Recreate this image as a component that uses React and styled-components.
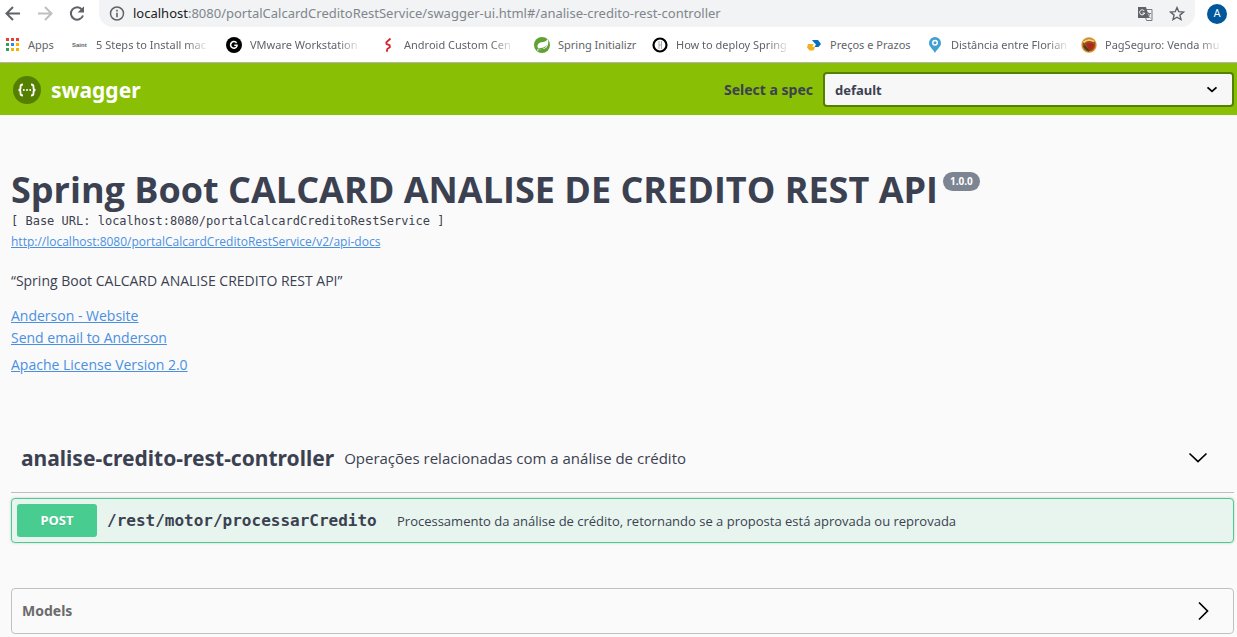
import React from 'react';
import styled, { createGlobalStyle, css } from 'styled-components';

const Global = createGlobalStyle`
  * { box-sizing: border-box; }
  body { margin: 0; background: #fafafa; color: #3b4151; font-family: "Open Sans", sans-serif; }
  button, select { font: inherit; color: inherit; }
`;

const BrowserChrome = styled.div`
  background: #fff;
  border-bottom: 1px solid #b4b4b8;
`;
const Toolbar = styled.div`
  display: flex;
  align-items: center;
  height: 27px;
  padding: 0 10px 0 4px;
`;
const IconButton = styled.button`
  display: flex;
  flex: none;
  padding: 0;
  margin-right: ${(p) => p.$gap || 0}px;
  border: 0;
  background: none;
  cursor: pointer;
`;
const AddressBar = styled.div`
  display: flex;
  flex: 1;
  align-items: center;
  min-width: 0;
  height: 27px;
  padding: 0 8px 0 10px;
  border-radius: 0 0 14px 14px;
  background: #f1f3f4;
`;
const AddressText = styled.div`
  flex: 1;
  min-width: 0;
  padding-bottom: 2px;
  white-space: nowrap;
  color: #80868b;
  font: 13px/20px "Noto Sans", sans-serif;
  strong { font-weight: 400; color: #202124; }
`;
const Avatar = styled.button`
  flex: none;
  width: 20px;
  height: 20px;
  margin-left: 12px;
  padding: 0;
  border: 0;
  border-radius: 50%;
  background: #01579b;
  && { color: #fff; font: 11px/20px Roboto, sans-serif; }
`;
const Bookmarks = styled.nav`
  display: flex;
  align-items: center;
  height: 35px;
  padding-left: 4px;
`;
const Bookmark = styled.a`
  display: flex;
  flex: 0 0 ${(p) => p.$width}px;
  align-items: center;
  gap: 8px;
  color: #5f6368;
  text-decoration: none;
  font: 11px/16px "Noto Sans", sans-serif;
`;
const BookmarkLabel = styled.span`
  white-space: nowrap;
  ${(p) => p.$fade && css`mask-image: linear-gradient(to left, rgba(0, 0, 0, 0.15), #000 20px);`}
`;
const SiteMark = styled.span`
  width: 16px;
  font: 700 6px/16px "Liberation Sans", sans-serif;
`;

const Topbar = styled.header`
  display: flex;
  align-items: center;
  justify-content: space-between;
  height: 52px;
  padding: 0 3px 0 12px;
  background: #89bf04;
`;
const Brand = styled.a`
  display: flex;
  align-items: center;
  gap: 9px;
  padding-top: 2px;
  color: #fff;
  text-decoration: none;
  font: 700 21px/28px "Noto Sans", sans-serif;
`;
const SpecField = styled.div`
  display: flex;
  align-items: center;
  gap: 10px;
`;
const SpecLabel = styled.label`
  padding-top: 2px;
  font: 700 14px/20px "Noto Sans", sans-serif;
`;
const SpecSelectBox = styled.div`
  display: grid;
  align-items: center;
  width: 411px;
  > * { grid-area: 1 / 1; }
  > svg { justify-self: end; margin-right: 16px; pointer-events: none; }
`;
const SpecSelect = styled.select`
  width: 100%;
  height: 35px;
  padding: 2px 40px 0 10px;
  appearance: none;
  border: 2px solid #547f00;
  border-radius: 4px;
  background: #f7f7f7;
  && { font: 700 13px/20px "Noto Sans", sans-serif; }
`;

const Page = styled.main`
  padding: 54px 3px 3px 11px;
`;
const Info = styled.section`
  font-size: 14px;
  line-height: 20px;
`;
const TitleRow = styled.div`
  display: flex;
  align-items: flex-start;
  gap: 5px;
`;
const Title = styled.h1`
  margin: 0;
  font-size: 36px;
  line-height: 42px;
  white-space: nowrap;
`;
const Version = styled.span`
  margin-top: 3px;
  padding: 0 7px;
  border-radius: 10px;
  background: #7d8492;
  color: #fff;
  font: 700 10px/19px "Noto Sans", sans-serif;
`;
const BaseUrl = styled.pre`
  margin: 0;
  padding-top: 1px;
  font: 12px/19px "DejaVu Sans Mono", monospace;
`;
const Link = styled.a`
  color: #4990e2;
  font-size: ${(p) => (p.$small ? 12 : 14)}px;
  line-height: 22px;
`;
const Description = styled.p`
  margin: 18px 0 14px;
  line-height: 20px;
`;
const Contact = styled.div`
  display: flex;
  flex-direction: column;
  align-items: flex-start;
  margin-bottom: 5px;
`;

const Tag = styled.section`
  margin-top: 53px;
`;
const TagHeader = styled.div`
  display: flex;
  align-items: center;
  gap: 10px;
  height: 64px;
  padding: 0 26px 6px 10px;
  border-bottom: 1px solid #bdbec2;
  > button { margin-left: auto; }
`;
const TagName = styled.h2`
  margin: 0;
  font: 700 21px/30px "Noto Sans", sans-serif;
`;
const TagText = styled.span`
  font-size: 15px;
  line-height: 20px;
`;
const Operation = styled.button`
  display: flex;
  align-items: center;
  gap: 10px;
  width: 100%;
  height: 45px;
  margin-top: 5px;
  padding: 5px;
  border: 1px solid #49cc90;
  border-radius: 4px;
  background: #e7f5ee;
  box-shadow: 0 0 3px rgba(0, 0, 0, 0.19);
  text-align: left;
`;
const Method = styled.span`
  width: 80px;
  border-radius: 3px;
  background: #49cc90;
  color: #fff;
  text-align: center;
  text-shadow: 0 1px 0 rgba(0, 0, 0, 0.1);
  font: 700 13px/33px "Noto Sans", sans-serif;
`;
const Path = styled.span`
  min-width: 280px;
  font: 700 16px/20px "DejaVu Sans Mono", monospace;
`;
const Summary = styled.span`
  font-size: 13px;
  line-height: 20px;
`;
const Models = styled.button`
  display: flex;
  align-items: center;
  justify-content: space-between;
  width: 100%;
  height: 46px;
  margin-top: 45px;
  padding: 0 20px 0 10px;
  border: 1px solid #bfc0c5;
  border-radius: 4px;
  background: none;
  && { color: #6b6b6b; font: 700 14px/20px "Noto Sans", sans-serif; }
`;

const Svg = ({ size = 16, children, ...rest }) => (
  <svg width={size} height={size} viewBox={`0 0 ${size} ${size}`} fill="none" aria-hidden="true" {...rest}>{children}</svg>
);
const BackIcon = ({ color }) => (
  <Svg size={18}><path d="M16 8.500H3M9 2 2.500 8.500 9 15" stroke={color} strokeWidth="2" /></Svg>
);
const ForwardIcon = ({ color }) => (
  <Svg size={18}><path d="M2 8.500h13M9 2l6.500 6.500L9 15" stroke={color} strokeWidth="2" /></Svg>
);
const ReloadIcon = () => (
  <Svg size={18}>
    <path d="M14 4.600A6.200 6.200 0 1 0 15 10.500" stroke="#5f6368" strokeWidth="2" />
    <path d="M16 1.200V7.600H9.600z" fill="#5f6368" />
  </Svg>
);
const InfoIcon = () => (
  <Svg><circle cx="8" cy="7.500" r="6.500" stroke="#5f6368" strokeWidth="1.500" /><path d="M8 6.700v4.500M8 3.800v1.700" stroke="#5f6368" strokeWidth="1.600" /></Svg>
);
const TranslateIcon = () => (
  <Svg>
    <path d="M6 3.500h9v11H9.500L6 3.500z" fill="#f1f3f4" stroke="#777b80" />
    <path d="M1 1h8l3.500 11H1z" fill="#5f6368" />
    <path d="M7.300 5A2.500 2.500 0 1 0 7.600 7H5.500" stroke="#fff" />
    <path d="M9.500 7.500h4.500M11.500 6.500v1M13 7.500c-.4 2-1.500 3-2.500 4M10.500 8.500c.5 1.500 1.500 2.500 3 3.500" stroke="#777b80" />
  </Svg>
);
const StarIcon = () => (
  <Svg><path d="m8 1.600 1.800 4.100 4.600.4-3.500 3 1.100 4.500L8 11.200l-4 2.400 1.100-4.500-3.500-3 4.600-.4z" stroke="#5f6368" strokeWidth="1.400" /></Svg>
);
const appColors = ['#ea3e35', '#ea3e35', '#ea3e35', '#2ea352', '#2a86f0', '#f7b208', '#2ea352', '#f7b208', '#f7b208'];
const AppsIcon = () => (
  <Svg>{appColors.map((c, i) => <rect key={i} x={2 + (i % 3) * 5} y={1 + Math.floor(i / 3) * 5} width="3" height="3" fill={c} />)}</Svg>
);
const GIcon = () => (
  <Svg><circle cx="8" cy="8" r="8" fill="#000" /><path d="M10.600 6A3.300 3.300 0 1 0 11 9V8.300H8.300" stroke="#fff" strokeWidth="1.500" /></Svg>
);
const ZigIcon = () => (
  <Svg><path d="M10.500 1.500 6.300 5.300 6.600 7l3 1.200.3 2L7.300 12l-.6 2.700" stroke="#d8232a" strokeWidth="1.800" /></Svg>
);
const SpringIcon = () => (
  <Svg>
    <circle cx="8" cy="8" r="8" fill="#5fa134" />
    <path d="M13.800 2c.8 3 .6 6-1 8-2.200 2.800-6 2-8.800 2.500 5 .2 7.500-1.500 9-4.500-2 2.300-4.500 3-8.800 3.400C2.600 8.500 4 6 7.500 5.300 10 4.800 12.300 4.500 13.800 2z" fill="#fff" />
    <circle cx="3.800" cy="13" r=".8" fill="#fff" />
  </Svg>
);
const RingIcon = () => (
  <Svg><circle cx="8" cy="8" r="6.500" fill="#fff" stroke="#000" strokeWidth="2.200" /><path d="M7 4v8M9.500 4v8M7 8h2.500" stroke="#aaa" /></Svg>
);
const PostIcon = () => (
  <Svg>
    <path d="M6 3h6l3 4-2.500 3H8.500L10 7.500 8.500 6z" fill="#0872b9" />
    <path d="M2 7h6L6 9.500l3 .5-1.500 3.500h-4L1 10.500z" fill="#f0b21c" />
  </Svg>
);
const PinIcon = () => (
  <Svg><path d="M8 0a6 6 0 0 0-6 6c0 4 4 6 6 10 2-4 6-6 6-10a6 6 0 0 0-6-6z" fill="#419fd1" /><circle cx="8" cy="5.800" r="3" fill="#fff" /><circle cx="8" cy="5.800" r="1.500" fill="#419fd1" /></Svg>
);
const PagIcon = () => (
  <Svg>
    <circle cx="8" cy="8" r="7.700" fill="#d9952b" />
    <circle cx="8" cy="8" r="6.300" fill="#9c4a1e" />
    <path d="M2.500 5.500c3-3 7-3 10.500-1" stroke="#f1d176" strokeWidth="1.800" />
    <path d="M5.500 7.500c2-2 6-1.500 7.500 0l-1.500 4.500-3.500.5z" fill="#b3261e" />
    <path d="m3 9 5 5" stroke="#42421f" strokeWidth="1.800" />
  </Svg>
);
const SwaggerLogo = () => (
  <Svg size={30}>
    <circle cx="15" cy="15" r="14" fill="#547f00" />
    <path d="M11 9.500c-2 0-2.500.5-2.500 2v1.500c0 1.300-.6 2-2 2 1.400 0 2 .7 2 2v1.500c0 1.500.5 2 2.500 2M19 9.500c2 0 2.500.5 2.500 2v1.500c0 1.300.6 2 2 2-1.400 0-2 .7-2 2v1.500c0 1.500-.5 2-2.500 2" stroke="#fff" strokeWidth="1.800" />
    <circle cx="11.800" cy="15" r="1" fill="#fff" /><circle cx="15" cy="15" r="1" fill="#fff" /><circle cx="18.200" cy="15" r="1" fill="#fff" />
  </Svg>
);
const SelectArrow = () => (
  <Svg size={12}><path d="m1.500 4.300 4.500 4L10.500 4.300" stroke="#000" strokeWidth="1.800" /></Svg>
);
const ChevronDown = () => (
  <Svg size={20}><path d="m1.500 5.500 8.500 8 8.500-8" stroke="#000" strokeWidth="1.700" /></Svg>
);
const ChevronRight = () => (
  <Svg size={20}><path d="m6 1.500 8.500 8.500L6 18.500" stroke="#000" strokeWidth="1.700" /></Svg>
);

const bookmarks = [
  { label: 'Apps', icon: <AppsIcon />, width: 68 },
  { label: '5 Steps to Install mac', icon: <SiteMark>Saint</SiteMark>, width: 154, fade: true },
  { label: 'VMware Workstation', icon: <GIcon />, width: 154, fade: true },
  { label: 'Android Custom Cen', icon: <ZigIcon />, width: 154, fade: true },
  { label: 'Spring Initializr', icon: <SpringIcon />, width: 118 },
  { label: 'How to deploy Spring', icon: <RingIcon />, width: 154, fade: true },
  { label: 'Preços e Prazos', icon: <PostIcon />, width: 121 },
  { label: 'Distância entre Florian', icon: <PinIcon />, width: 154, fade: true },
  { label: 'PagSeguro: Venda mu', icon: <PagIcon />, width: 150, fade: true },
];

export default function App() {
  return (
    <>
      <Global />
      <BrowserChrome>
        <Toolbar>
          <IconButton $gap={14} aria-label="Back"><BackIcon color="#5f6368" /></IconButton>
          <IconButton $gap={14} aria-label="Forward"><ForwardIcon color="#bdbfc2" /></IconButton>
          <IconButton $gap={13} aria-label="Reload"><ReloadIcon /></IconButton>
          <AddressBar>
            <IconButton $gap={8} aria-label="Site information"><InfoIcon /></IconButton>
            <AddressText>
              <strong>localhost</strong>:8080/portalCalcardCreditoRestService/swagger-ui.html#/analise-credito-rest-controller
            </AddressText>
            <IconButton $gap={16} aria-label="Translate"><TranslateIcon /></IconButton>
            <IconButton $gap={2} aria-label="Bookmark"><StarIcon /></IconButton>
          </AddressBar>
          <Avatar aria-label="Profile">A</Avatar>
        </Toolbar>
        <Bookmarks>
          {bookmarks.map((b) => (
            <Bookmark key={b.label} href="#" $width={b.width}>
              {b.icon}
              <BookmarkLabel $fade={b.fade}>{b.label}</BookmarkLabel>
            </Bookmark>
          ))}
        </Bookmarks>
      </BrowserChrome>
      <Topbar>
        <Brand href="#"><SwaggerLogo />swagger</Brand>
        <SpecField>
          <SpecLabel htmlFor="spec">Select a spec</SpecLabel>
          <SpecSelectBox>
            <SpecSelect id="spec"><option>default</option></SpecSelect>
            <SelectArrow />
          </SpecSelectBox>
        </SpecField>
      </Topbar>
      <Page>
        <Info>
          <TitleRow>
            <Title>Spring Boot CALCARD ANALISE DE CREDITO REST API</Title>
            <Version>1.0.0</Version>
          </TitleRow>
          <BaseUrl>[ Base URL: localhost:8080/portalCalcardCreditoRestService ]</BaseUrl>
          <Link $small href="#">http://localhost:8080/portalCalcardCreditoRestService/v2/api-docs</Link>
          <Description>“Spring Boot CALCARD ANALISE CREDITO REST API”</Description>
          <Contact>
            <Link href="#">Anderson - Website</Link>
            <Link href="#">Send email to Anderson</Link>
          </Contact>
          <Link href="#">Apache License Version 2.0</Link>
        </Info>
        <Tag>
          <TagHeader>
            <TagName>analise-credito-rest-controller</TagName>
            <TagText>Operações relacionadas com a análise de crédito</TagText>
            <IconButton aria-label="Collapse operations"><ChevronDown /></IconButton>
          </TagHeader>
          <Operation>
            <Method>POST</Method>
            <Path>/rest/motor/processarCredito</Path>
            <Summary>Processamento da análise de crédito, retornando se a proposta está aprovada ou reprovada</Summary>
          </Operation>
        </Tag>
        <Models>Models<ChevronRight /></Models>
      </Page>
    </>
  );
}
